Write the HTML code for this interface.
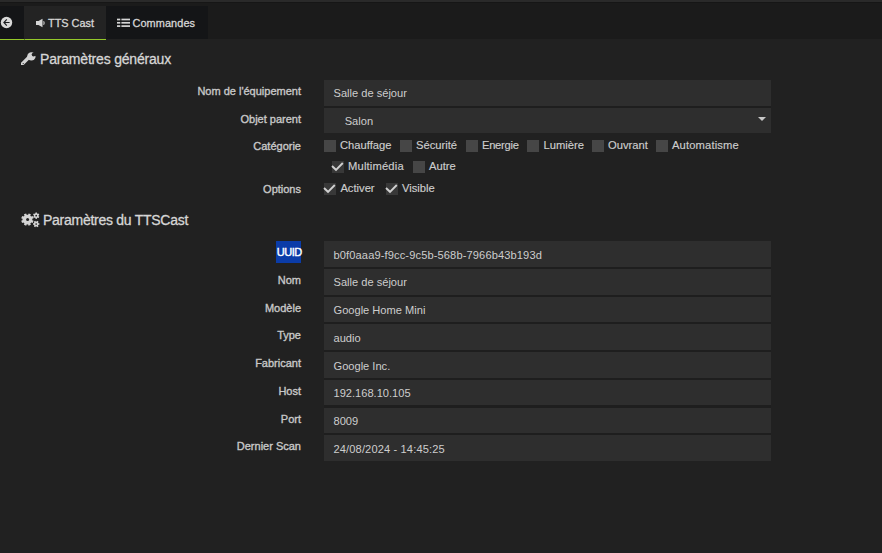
<!DOCTYPE html>
<html><head><meta charset="utf-8">
<style>
html,body{margin:0;padding:0;}
body{width:882px;height:553px;overflow:hidden;background:#212121;position:relative;font-family:"Liberation Sans",sans-serif;}
.a{position:absolute;}
.t{position:absolute;white-space:nowrap;}
.lab{font-size:11px;line-height:11px;color:#c8c8c8;text-align:right;right:581px;-webkit-text-stroke:0.35px #c8c8c8;}
.val{font-size:11.1px;line-height:11.1px;color:#cdcdcd;left:333.5px;}
.inp{position:absolute;left:324px;width:447px;background:#2e2e2e;}
.sep{position:absolute;left:324px;width:447px;background:#1e1e1e;}
.chk{position:absolute;width:12px;height:12px;background:#464646;}
.chk.on{background:#383838;}
.cl{font-size:11.2px;line-height:11.2px;color:#cdcdcd;-webkit-text-stroke:0.15px #cdcdcd;}
.hdr{font-size:14px;line-height:14px;color:#d6d6d6;-webkit-text-stroke:0.3px #d6d6d6;}
.tab{font-size:10.9px;line-height:10.9px;color:#d6d6d6;-webkit-text-stroke:0.3px #d6d6d6;}
</style></head><body>
<!-- top bar -->
<div class="a" style="left:0;top:0;width:882px;height:2px;background:#2a2a2a"></div>
<div class="a" style="left:0;top:2px;width:882px;height:37px;background:#1b1b1b"></div>
<div class="a" style="left:0;top:2px;width:882px;height:1px;background:#161616"></div>
<div class="a" style="left:0;top:6px;width:24px;height:33px;background:#141517"></div>
<div class="a" style="left:24px;top:6px;width:82px;height:33px;background:#232323"></div>
<div class="a" style="left:106px;top:6px;width:102px;height:33px;background:#141517"></div>
<div class="a" style="left:0;top:39px;width:24px;height:1px;background:#94c82a"></div>
<div class="a" style="left:25px;top:39px;width:81px;height:1px;background:#94c82a"></div>
<div class="a" style="left:24px;top:39px;width:1px;height:1px;background:#5a7a28"></div>

<!-- back icon -->
<svg class="a" style="left:0;top:16.3px" width="14" height="14" viewBox="0 0 14 14">
<circle cx="6.5" cy="6.5" r="5.7" fill="#d8d8d8"/>
<path d="M6.8 3.4 L3.9 6.5 L6.8 9.6 M4.4 6.5 H9.6" stroke="#1a1b1e" stroke-width="1.15" fill="none"/>
</svg>
<!-- speaker icon -->
<svg class="a" style="left:35px;top:18px" width="11" height="10" viewBox="0 0 11 10">
<path d="M1 3 H3.5 L7.5 0.8 V9.2 L3.5 7 H1 Z" fill="#d6d6d6"/>
<path d="M8.6 3.2 Q9.8 5 8.6 6.8" stroke="#d6d6d6" stroke-width="1.1" fill="none"/>
</svg>
<div class="t tab" style="left:48px;top:18.3px">TTS Cast</div>
<!-- list icon -->
<svg class="a" style="left:117px;top:18px" width="14" height="10" viewBox="0 0 14 10">
<g fill="#d6d6d6">
<rect x="0" y="0.65" width="3.3" height="1.7"/>
<rect x="0" y="3.95" width="3.3" height="1.7"/>
<rect x="0" y="7.25" width="3.3" height="1.7"/>
<rect x="4.4" y="0.65" width="8.6" height="1.7"/>
<rect x="4.4" y="3.95" width="8.6" height="1.7"/>
<rect x="4.4" y="7.25" width="8.6" height="1.7"/>
</g>
</svg>
<div class="t tab" style="left:132.5px;top:18.3px;letter-spacing:0.1px">Commandes</div>

<!-- Section 1 header -->
<svg class="a" style="left:18px;top:49px" width="22" height="22" viewBox="0 0 22 22">
<defs><mask id="wm"><rect x="0" y="0" width="22" height="22" fill="#fff"/>
<circle cx="15.6" cy="5.6" r="1.9" fill="#000"/>
<path d="M15.6 3.7 L19 0.3 L22 3.3 L17.5 7.5 Z" fill="#000"/>
<circle cx="5.2" cy="14.6" r="0.6" fill="#000"/>
</mask></defs>
<g mask="url(#wm)" fill="#d4d4d4">
<path d="M4.2 15 L12.2 7" stroke="#d4d4d4" stroke-width="3.3" stroke-linecap="round"/>
<circle cx="13.4" cy="7.4" r="4.2"/>
</g>
</svg>
<div class="t hdr" style="left:40px;top:52.2px;letter-spacing:-0.19px">Paramètres généraux</div>

<div class="t lab" style="top:86.4px">Nom de l'équipement</div>
<div class="t lab" style="top:113.6px">Objet parent</div>
<div class="t lab" style="top:141.4px">Catégorie</div>
<div class="t lab" style="top:184.4px">Options</div>

<div class="inp" style="top:80px;height:26px"></div>
<div class="sep" style="top:106px;height:2px"></div>
<div class="inp" style="top:108px;height:25px"></div>
<div class="t val" style="top:87.6px">Salle de séjour</div>
<div class="t val" style="top:116.4px;left:344.7px">Salon</div>
<svg class="a" style="left:758px;top:117px" width="8" height="4" viewBox="0 0 8 4"><path d="M0 0 H8 L4 4 Z" fill="#c8c8c8"/></svg>

<!-- categories -->
<div class="chk" style="left:324px;top:140px"></div><div class="t cl" style="left:340px;top:139.5px">Chauffage</div>
<div class="chk" style="left:400px;top:140px"></div><div class="t cl" style="left:416px;top:139.5px">Sécurité</div>
<div class="chk" style="left:466px;top:140px"></div><div class="t cl" style="left:482px;top:139.5px;letter-spacing:-0.28px">Energie</div>
<div class="chk" style="left:527px;top:140px"></div><div class="t cl" style="left:543.5px;top:139.5px">Lumière</div>
<div class="chk" style="left:592px;top:140px"></div><div class="t cl" style="left:608px;top:139.5px">Ouvrant</div>
<div class="chk" style="left:656px;top:140px"></div><div class="t cl" style="left:672px;top:139.5px;letter-spacing:0.15px">Automatisme</div>

<div class="chk on" style="left:332px;top:161px"></div>
<svg class="a" style="left:331px;top:162px" width="14" height="10" viewBox="0 0 14 10"><path d="M1 4.0 L5 7.8 L11.8 1.0" stroke="#d0d0d0" stroke-width="1.9" fill="none"/></svg>
<div class="t cl" style="left:348px;top:160.5px;letter-spacing:0.17px">Multimédia</div>
<div class="chk" style="left:413px;top:161px"></div><div class="t cl" style="left:429px;top:160.5px">Autre</div>

<div class="chk on" style="left:324px;top:183px"></div>
<svg class="a" style="left:323px;top:184px" width="14" height="10" viewBox="0 0 14 10"><path d="M1 4.0 L5 7.8 L11.8 1.0" stroke="#d0d0d0" stroke-width="1.9" fill="none"/></svg>
<div class="t cl" style="left:340.4px;top:183.4px">Activer</div>
<div class="chk on" style="left:386px;top:183px"></div>
<svg class="a" style="left:385px;top:184px" width="14" height="10" viewBox="0 0 14 10"><path d="M1 4.0 L5 7.8 L11.8 1.0" stroke="#d0d0d0" stroke-width="1.9" fill="none"/></svg>
<div class="t cl" style="left:402px;top:183.4px">Visible</div>

<!-- Section 2 header -->
<svg class="a" style="left:18px;top:208px" width="24" height="24" viewBox="0 0 24 24">
<defs><mask id="gm"><rect x="0" y="0" width="24" height="24" fill="#fff"/>
<circle cx="9.6" cy="11.6" r="1.5" fill="#000"/>
<circle cx="18.2" cy="7.7" r="0.85" fill="#000"/>
<circle cx="18.2" cy="16" r="0.85" fill="#000"/>
</mask></defs>
<g fill="#d4d4d4" mask="url(#gm)">
<circle cx="9.4" cy="11.6" r="4.9"/><rect x="8.20" y="5.40" width="2.4" height="12.40" transform="rotate(22.5 9.4 11.6)"/><rect x="8.20" y="5.40" width="2.4" height="12.40" transform="rotate(67.5 9.4 11.6)"/><rect x="8.20" y="5.40" width="2.4" height="12.40" transform="rotate(112.5 9.4 11.6)"/><rect x="8.20" y="5.40" width="2.4" height="12.40" transform="rotate(157.5 9.4 11.6)"/><circle cx="18.2" cy="7.7" r="2.4"/><rect x="17.45" y="4.50" width="1.5" height="6.40" transform="rotate(0.0 18.2 7.7)"/><rect x="17.45" y="4.50" width="1.5" height="6.40" transform="rotate(60.0 18.2 7.7)"/><rect x="17.45" y="4.50" width="1.5" height="6.40" transform="rotate(120.0 18.2 7.7)"/><circle cx="18.2" cy="16" r="2.4"/><rect x="17.45" y="12.80" width="1.5" height="6.40" transform="rotate(30.0 18.2 16)"/><rect x="17.45" y="12.80" width="1.5" height="6.40" transform="rotate(90.0 18.2 16)"/><rect x="17.45" y="12.80" width="1.5" height="6.40" transform="rotate(150.0 18.2 16)"/>
</g>
</svg>
<div class="t hdr" style="left:43px;top:213.4px;letter-spacing:-0.27px">Paramètres du TTSCast</div>

<div class="a" style="left:276px;top:241px;width:25px;height:22px;background:#0b3ca8"></div>
<div class="t lab" style="top:246.7px;color:#fff;-webkit-text-stroke:0.4px #fff;letter-spacing:-0.55px;right:580.45px">UUID</div>
<div class="t lab" style="top:274.7px">Nom</div>
<div class="t lab" style="top:302.7px">Modèle</div>
<div class="t lab" style="top:329.7px">Type</div>
<div class="t lab" style="top:357.7px">Fabricant</div>
<div class="t lab" style="top:385.7px">Host</div>
<div class="t lab" style="top:413.7px">Port</div>
<div class="t lab" style="top:440.7px">Dernier Scan</div>

<div class="sep" style="top:267px;height:194px;background:#1e1e1e"></div>
<div class="inp" style="top:241px;height:26px"></div>
<div class="inp" style="top:269px;height:26px"></div>
<div class="inp" style="top:297px;height:25px"></div>
<div class="inp" style="top:324px;height:26px"></div>
<div class="inp" style="top:352px;height:26px"></div>
<div class="inp" style="top:380px;height:25px"></div>
<div class="inp" style="top:408px;height:25px"></div>
<div class="inp" style="top:435px;height:26px"></div>

<div class="t val" style="top:250.2px;letter-spacing:0.12px">b0f0aaa9-f9cc-9c5b-568b-7966b43b193d</div>
<div class="t val" style="top:277.2px">Salle de séjour</div>
<div class="t val" style="top:305.4px">Google Home Mini</div>
<div class="t val" style="top:332.6px">audio</div>
<div class="t val" style="top:360.5px">Google Inc.</div>
<div class="t val" style="top:388.1px">192.168.10.105</div>
<div class="t val" style="top:415.5px">8009</div>
<div class="t val" style="top:443.7px;letter-spacing:0.13px">24/08/2024 - 14:45:25</div>
</body></html>
